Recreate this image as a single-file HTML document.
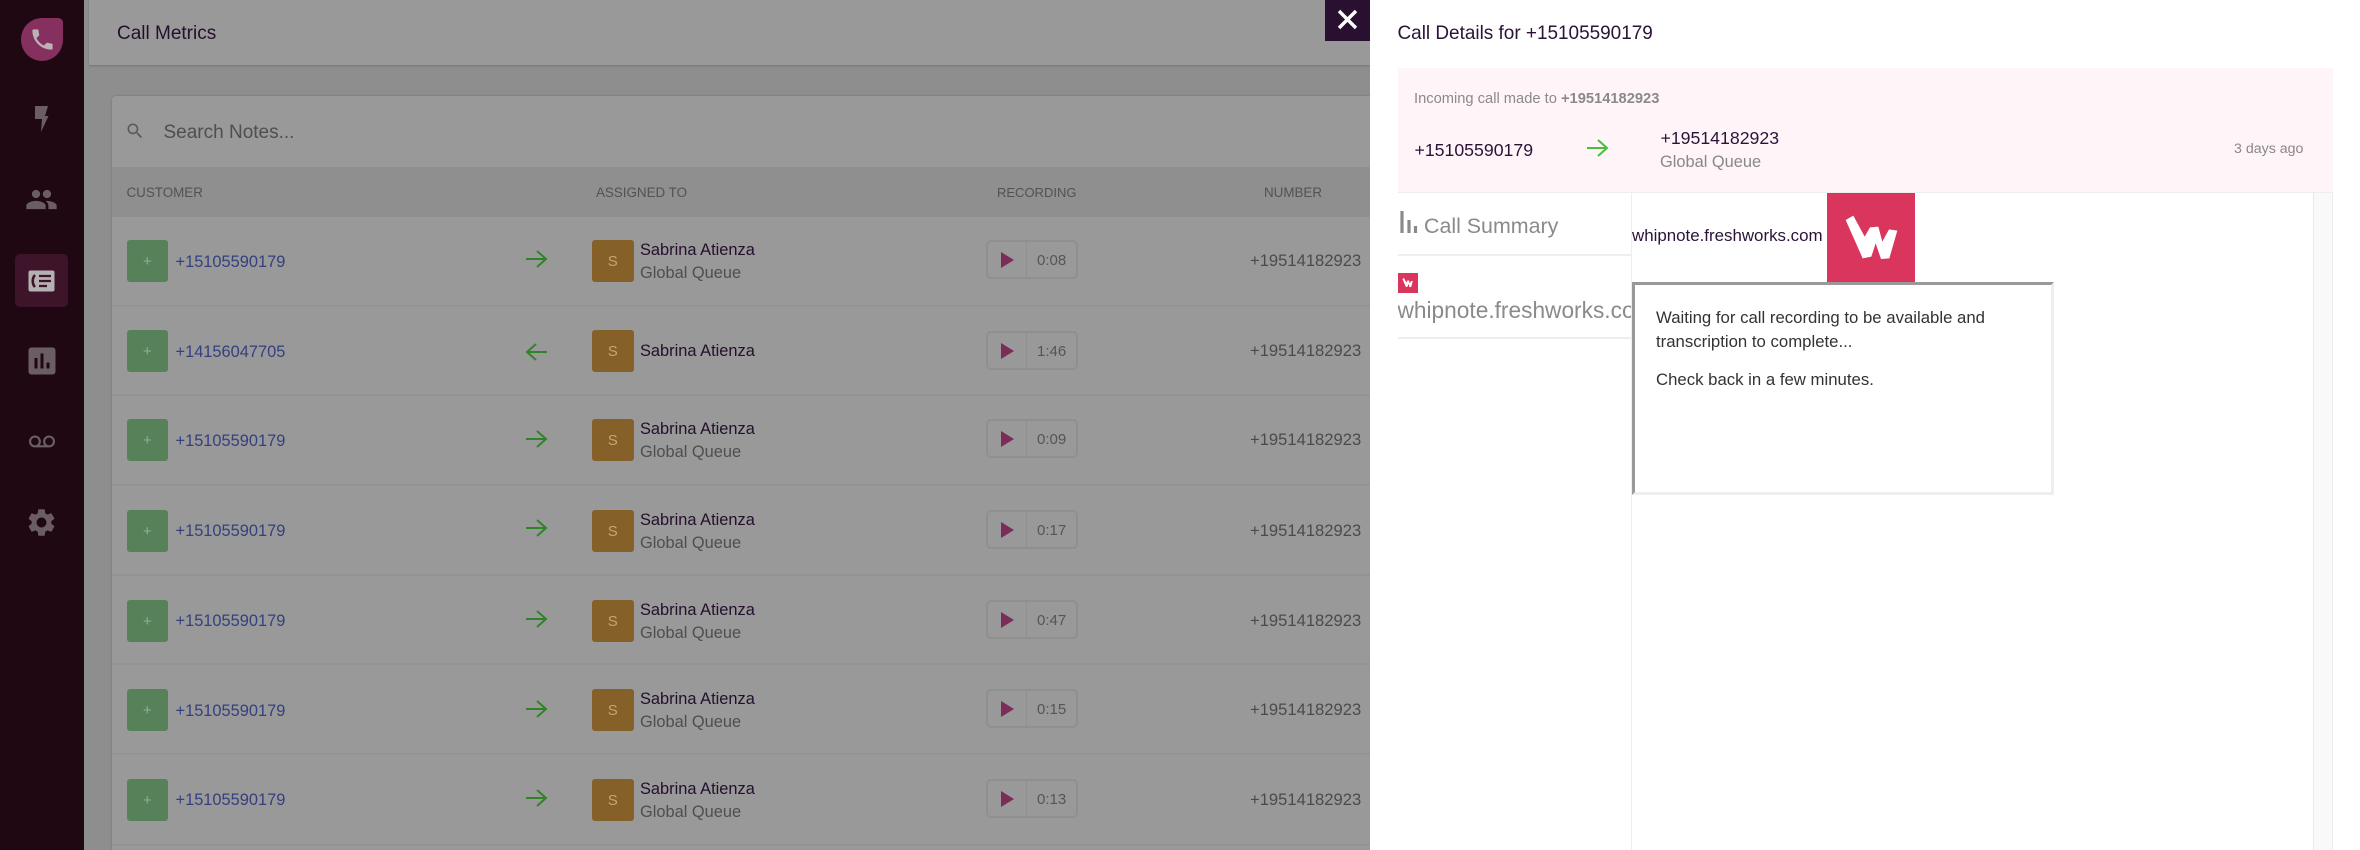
<!DOCTYPE html>
<html lang="en"><head><meta charset="utf-8"><title>Call Details</title>
<style>
*{box-sizing:border-box}
html,body{margin:0;padding:0;width:2360px;height:850px;overflow:hidden;background:#8e8e8e}
body{position:relative;font-family:"Liberation Sans",sans-serif;font-size:16.4px;filter:blur(.35px)}
.a{position:absolute;white-space:nowrap;line-height:20px}
svg{position:absolute;display:block}
.row{position:absolute;left:0;width:1370px;height:42px}
.av{position:absolute;width:41.5px;height:42px;top:0;border-radius:3px;text-align:center;line-height:44px;font-size:15px}
.g{left:126.5px;background:#578259;color:#8fb092}
.s{left:592px;background:#856029;color:#c4a678}
.ph{left:175.5px;top:11px;color:#34407f}
.ph.d{top:12px}
.nm{left:640px;color:#240f2c}
.q{left:640px;top:23px;color:#4e4e4e}
.rec{position:absolute;left:986px;top:0;width:92px;height:39px;border:2px solid #8f8f8f;border-radius:5px}
.rec i{position:absolute;left:38px;top:0;bottom:0;width:1px;background:#8f8f8f}
.rec b{position:absolute;left:13px;top:10px;width:0;height:0;border-left:13px solid #7a2d58;border-top:8px solid transparent;border-bottom:8px solid transparent}
.rec span{position:absolute;left:49px;top:9px;line-height:20px;font-size:15px;color:#555}
.num{left:1250px;top:11px;color:#4b4b4b;font-size:16.6px}
.ln{position:absolute;left:112px;width:1258px;height:2px;background:#939393}
.th{top:182px;font-size:13.4px;color:#525252}
.ar{fill:none;stroke:#2f8428;stroke-width:2}
</style></head><body>

<div style="position:absolute;left:0;top:0;width:83.5px;height:850px;background:#1f0812"></div>
<div style="position:absolute;left:21px;top:18px;width:42px;height:43px;background:#85305f;border-radius:22px 5px 22px 22px"></div>
<svg style="left:29px;top:26px" width="27" height="27" viewBox="0 0 24 24"><path fill="#b9b4b6" d="M6.62 10.79c1.44 2.83 3.76 5.14 6.59 6.59l2.2-2.2c.27-.27.67-.36 1.02-.24 1.12.37 2.33.57 3.57.57.55 0 1 .45 1 1V20c0 .55-.45 1-1 1-9.39 0-17-7.61-17-17 0-.55.45-1 1-1h3.5c.55 0 1 .45 1 1 0 1.25.2 2.45.57 3.57.11.35.03.74-.25 1.02l-2.2 2.2z"/></svg>
<svg style="left:34px;top:105px" width="15" height="28" viewBox="0 0 15 28"><path fill="#6b5d64" d="M1 1h13l-3 10h3.500L7 27l1-13H1z"/></svg>
<svg style="left:25px;top:183px" width="33" height="33" viewBox="0 0 24 24"><path fill="#6b5d64" d="M16 11c1.660 0 2.990-1.340 2.990-3S17.660 5 16 5c-1.660 0-3 1.340-3 3s1.340 3 3 3zm-8 0c1.660 0 2.990-1.340 2.990-3S9.660 5 8 5C6.340 5 5 6.340 5 8s1.340 3 3 3zm0 2c-2.330 0-7 1.170-7 3.500V19h14v-2.500c0-2.330-4.670-3.500-7-3.500zm8 0c-.29 0-.62.02-.97.05 1.160.84 1.970 1.970 1.970 3.450V19h6v-2.500c0-2.330-4.670-3.500-7-3.500z"/></svg>
<div style="position:absolute;left:15px;top:254px;width:53px;height:53px;background:#3e142a;border-radius:5px"></div>
<svg style="left:28px;top:270px" width="27" height="22" viewBox="0 0 27 22"><rect x="0.500" y="0.500" width="26" height="21" rx="2" fill="#b5b0b2"/><path d="M7 5C4 8 4 14 7 17" fill="none" stroke="#3e142a" stroke-width="2.600"/><path d="M11 6h12M11 11h12M11 16h8" stroke="#3e142a" stroke-width="2.200"/></svg>
<svg style="left:24px;top:343px" width="36" height="36" viewBox="0 0 24 24"><path fill="#6b5d64" d="M19 3H5c-1.100 0-2 .9-2 2v14c0 1.100.9 2 2 2h14c1.100 0 2-.9 2-2V5c0-1.100-.9-2-2-2zM9 17H7v-7h2v7zm4 0h-2V7h2v10zm4 0h-2v-4h2v4z"/></svg>
<svg style="left:28.500px;top:429px" width="26" height="26" viewBox="0 0 24 24"><path fill="#6b5d64" d="M18.500 6C15.460 6 13 8.460 13 11.500c0 1.330.47 2.550 1.260 3.500H9.740c.79-.95 1.260-2.170 1.260-3.500C11 8.460 8.540 6 5.500 6S0 8.460 0 11.500 2.460 17 5.500 17h13c3.040 0 5.500-2.460 5.500-5.500S21.540 6 18.500 6zm-13 9C3.570 15 2 13.430 2 11.500S3.570 8 5.500 8 9 9.570 9 11.500 7.430 15 5.500 15zm13 0c-1.930 0-3.500-1.570-3.500-3.500S16.570 8 18.500 8 22 9.570 22 11.500 20.430 15 18.500 15z"/></svg>
<svg style="left:25px;top:506px" width="33" height="33" viewBox="0 0 24 24"><path fill="#6b5d64" d="M19.140 12.940c.04-.3.06-.61.06-.94 0-.32-.02-.64-.07-.94l2.030-1.580c.18-.14.23-.41.12-.61l-1.920-3.320c-.12-.22-.37-.29-.59-.22l-2.390.96c-.5-.38-1.030-.7-1.620-.94l-.36-2.540c-.04-.24-.24-.41-.48-.41h-3.840c-.24 0-.43.17-.47.41l-.36 2.540c-.59.24-1.130.57-1.620.94l-2.390-.96c-.22-.08-.47 0-.59.22L2.740 8.870c-.12.21-.08.47.12.61l2.030 1.580c-.05.3-.09.63-.09.94s.02.64.07.94l-2.030 1.580c-.18.14-.23.41-.12.61l1.920 3.320c.12.22.37.29.59.22l2.390-.96c.5.38 1.030.7 1.620.94l.36 2.540c.05.24.24.41.48.41h3.840c.24 0 .44-.17.47-.41l.36-2.540c.59-.24 1.130-.56 1.620-.94l2.390.96c.22.08.47 0 .59-.22l1.920-3.320c.12-.22.07-.47-.12-.61l-2.010-1.580zM12 15.600c-1.980 0-3.600-1.620-3.600-3.600s1.620-3.600 3.600-3.600 3.600 1.620 3.600 3.600-1.620 3.600-3.600 3.600z"/></svg>

<div style="position:absolute;left:89px;top:0;width:1281px;height:65px;background:#999;box-shadow:0 1px 2px rgba(0,0,0,.18)"></div>
<div class="a" style="left:117px;top:24px;font-size:19px;color:#240f2c">Call Metrics</div>

<div style="position:absolute;left:112px;top:96px;width:1258px;height:754px;background:#999;border-radius:4px 0 0 0;box-shadow:0 0 2px rgba(0,0,0,.2)"></div>
<svg style="left:125px;top:121px" width="20" height="20" viewBox="0 0 24 24"><path fill="#5a5a5a" d="M15.500 14h-.79l-.28-.27C15.410 12.590 16 11.110 16 9.500 16 5.910 13.090 3 9.500 3S3 5.910 3 9.500 5.910 16 9.500 16c1.610 0 3.090-.59 4.230-1.570l.27.28v.79l5 4.990L20.490 19l-4.990-5zm-6 0C7.010 14 5 11.990 5 9.500S7.010 5 9.500 5 14 7.010 14 9.500 11.990 14 9.500 14z"/></svg>
<div class="a" style="left:163.500px;top:123px;font-size:19px;color:#4f4f4f">Search Notes...</div>
<div style="position:absolute;left:112px;top:167px;width:1258px;height:50px;background:#8f8f8f"></div>
<div class="a th" style="left:126.500px;top:183px">CUSTOMER</div>
<div class="a th" style="left:596px;top:183px">ASSIGNED TO</div>
<div class="a th" style="left:997px;top:183px;font-size:13px">RECORDING</div>
<div class="a th" style="left:1264px;top:183px">NUMBER</div>

<div class="ln" style="top:305px"></div><div class="ln" style="top:394px"></div><div class="ln" style="top:484px"></div><div class="ln" style="top:574px"></div><div class="ln" style="top:663px"></div><div class="ln" style="top:753px"></div><div class="ln" style="top:844px"></div>

<div class="row" style="top:240px"><div class="av g">+</div><div class="a ph d">+15105590179</div>
<svg style="left:525px;top:9px" width="23" height="20" viewBox="0 0 23 20"><path class="ar" d="M1 10h20M12 2l9 8-9 8"/></svg>
<div class="av s">S</div><div class="a nm">Sabrina Atienza</div><div class="a q">Global Queue</div>
<div class="rec"><i></i><b></b><span>0:08</span></div><div class="a num">+19514182923</div></div>

<div class="row" style="top:330px"><div class="av g">+</div><div class="a ph d">+14156047705</div>
<svg style="left:525px;top:12px" width="23" height="20" viewBox="0 0 23 20"><path class="ar" d="M22 10H2M11 2l-9 8 9 8"/></svg>
<div class="av s">S</div><div class="a nm" style="top:11px">Sabrina Atienza</div>
<div class="rec" style="top:1px"><i></i><b></b><span>1:46</span></div><div class="a num">+19514182923</div></div>

<div class="row" style="top:419px"><div class="av g">+</div><div class="a ph d">+15105590179</div>
<svg style="left:525px;top:10px" width="23" height="20" viewBox="0 0 23 20"><path class="ar" d="M1 10h20M12 2l9 8-9 8"/></svg>
<div class="av s">S</div><div class="a nm">Sabrina Atienza</div><div class="a q">Global Queue</div>
<div class="rec"><i></i><b></b><span>0:09</span></div><div class="a num">+19514182923</div></div>

<div class="row" style="top:510px"><div class="av g">+</div><div class="a ph">+15105590179</div>
<svg style="left:525px;top:8px" width="23" height="20" viewBox="0 0 23 20"><path class="ar" d="M1 10h20M12 2l9 8-9 8"/></svg>
<div class="av s">S</div><div class="a nm">Sabrina Atienza</div><div class="a q">Global Queue</div>
<div class="rec"><i></i><b></b><span>0:17</span></div><div class="a num">+19514182923</div></div>

<div class="row" style="top:600px"><div class="av g">+</div><div class="a ph">+15105590179</div>
<svg style="left:525px;top:9px" width="23" height="20" viewBox="0 0 23 20"><path class="ar" d="M1 10h20M12 2l9 8-9 8"/></svg>
<div class="av s">S</div><div class="a nm">Sabrina Atienza</div><div class="a q">Global Queue</div>
<div class="rec"><i></i><b></b><span>0:47</span></div><div class="a num">+19514182923</div></div>

<div class="row" style="top:689px"><div class="av g">+</div><div class="a ph d">+15105590179</div>
<svg style="left:525px;top:10px" width="23" height="20" viewBox="0 0 23 20"><path class="ar" d="M1 10h20M12 2l9 8-9 8"/></svg>
<div class="av s">S</div><div class="a nm">Sabrina Atienza</div><div class="a q">Global Queue</div>
<div class="rec"><i></i><b></b><span>0:15</span></div><div class="a num">+19514182923</div></div>

<div class="row" style="top:779px"><div class="av g">+</div><div class="a ph">+15105590179</div>
<svg style="left:525px;top:9px" width="23" height="20" viewBox="0 0 23 20"><path class="ar" d="M1 10h20M12 2l9 8-9 8"/></svg>
<div class="av s">S</div><div class="a nm">Sabrina Atienza</div><div class="a q">Global Queue</div>
<div class="rec"><i></i><b></b><span>0:13</span></div><div class="a num">+19514182923</div></div>

<!-- close -->
<div style="position:absolute;left:1325px;top:0;width:45px;height:41px;background:#2a1030"></div>
<svg style="left:1336px;top:8px" width="23" height="23" viewBox="0 0 23 23"><path d="M3 3l17 17M20 3L3 20" stroke="#fff" stroke-width="3.400"/></svg>

<!-- panel -->
<div style="position:absolute;left:1369.500px;top:0;width:990.500px;height:850px;background:#fff"></div>
<div class="a" style="left:1397.500px;top:24px;font-size:18.950px;color:#2b1338">Call Details for +15105590179</div>
<div style="position:absolute;left:1397.500px;top:68px;width:935.500px;height:124px;background:#fff4f8"></div>
<div style="position:absolute;left:1397.500px;top:192px;width:935.500px;height:1px;background:#eee"></div>
<div class="a" style="left:1414px;top:89px;font-size:14.700px;color:#8a8a8a">Incoming call made to <b>+19514182923</b></div>
<div class="a" style="left:1414.500px;top:140px;font-size:17.700px;color:#2b1338">+15105590179</div>
<svg style="left:1586px;top:138px" width="23" height="20" viewBox="0 0 23 20"><path d="M1 10h20M12 2l9 8-9 8" fill="none" stroke="#46c03c" stroke-width="2"/></svg>
<div class="a" style="left:1660.500px;top:128px;font-size:17.700px;color:#2b1338">+19514182923</div>
<div class="a" style="left:1660px;top:152px;font-size:16.400px;color:#888">Global Queue</div>
<div class="a" style="left:2234px;top:139px;font-size:14.200px;color:#888">3 days ago</div>

<svg style="left:1400px;top:211px" width="18" height="23" viewBox="0 0 18 23"><path d="M2 0v22M9 9v13M15.500 15v7" stroke="#8a8a8a" stroke-width="3.200"/></svg>
<div class="a" style="left:1424px;top:216px;font-size:21.400px;color:#8a8a8a">Call Summary</div>
<div style="position:absolute;left:1397.500px;top:254px;width:234px;height:2px;background:#eee"></div>
<svg style="left:1397.500px;top:273px" width="20" height="20" viewBox="0 0 300 285" preserveAspectRatio="none"><rect width="300" height="285" fill="#d9355d"/><path fill="#fff" transform="translate(-10 -5)" d="M77 90L100 77L134 140L150 112L175 110L187 155L207 118L232 122L208 205L183 207L167 160L154 200L128 205Z"/></svg>
<div style="position:absolute;left:1397.500px;top:296px;width:234px;height:30px;overflow:hidden"><div class="a" style="left:0;top:2px;font-size:22.700px;line-height:24px;color:#8a8a8a">whipnote.freshworks.com</div></div>
<div style="position:absolute;left:1397.500px;top:337px;width:234px;height:2px;background:#eee"></div>
<div style="position:absolute;left:1631px;top:193px;width:1px;height:657px;background:#eee"></div>

<div class="a" style="left:1632px;top:226px;font-size:16.900px;color:#2b1338">whipnote.freshworks.com</div>
<div style="position:absolute;left:1827px;top:193px;width:88px;height:90px;background:#d9355d"></div>
<svg style="left:1820px;top:190px" width="100" height="95" viewBox="0 0 300 285"><path fill="#fff" d="M77 90L100 77L134 140L150 112L175 110L187 155L207 118L232 122L208 205L183 207L167 160L154 200L128 205Z"/></svg>

<div style="position:absolute;left:1632px;top:282px;width:422px;height:213px;background:#fff;border:3px solid;border-color:#999 #eee #eee #999"></div>
<div class="a" style="left:1656px;top:308px;font-size:16.750px;color:#333">Waiting for call recording to be available and</div>
<div class="a" style="left:1656px;top:332px;font-size:16.750px;color:#333">transcription to complete...</div>
<div class="a" style="left:1656px;top:370px;font-size:16.750px;color:#333">Check back in a few minutes.</div>

<div style="position:absolute;left:2313px;top:193px;width:20px;height:657px;background:#f9f9f9;border-left:1px solid #e8e8e8;border-right:1px solid #ededed"></div>
</body></html>
